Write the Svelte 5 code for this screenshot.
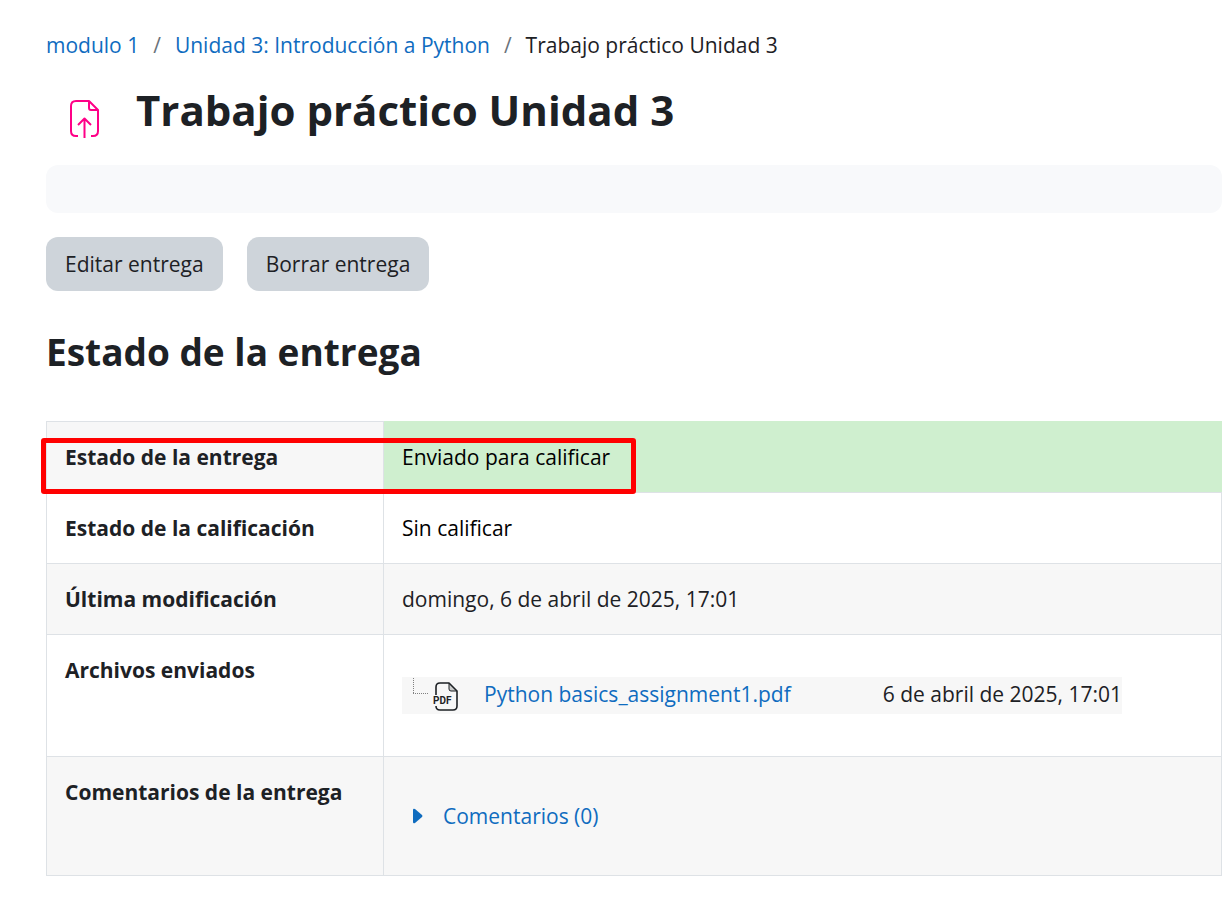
<script>
  const crumbs = [
    { label: 'modulo 1', href: '#modulo' },
    { label: 'Unidad 3: Introducción a Python', href: '#unidad' },
    { label: 'Trabajo práctico Unidad 3' }
  ];
  let open = $state(false);
</script>

<main>
  <nav aria-label="Ruta de navegación">
    <ol>
      {#each crumbs as crumb}
        <li>
          {#if crumb.href}
            <a href={crumb.href}>{crumb.label}</a>
          {:else}
            <span aria-current="page">{crumb.label}</span>
          {/if}
        </li>
      {/each}
    </ol>
  </nav>

  <header>
    <svg class="activity" viewBox="0 0 30 40" width="30" height="40" fill="none" stroke="#ff0087" stroke-width="2" stroke-linejoin="round" aria-hidden="true">
      <path d="M8 37H6Q1 37 1 32V7Q1 2 6 2H19L28 11V32Q28 37 23 37H21" />
      <path d="M19 2V9Q19 11 21 11H28" />
      <path d="M14.500 39V20M8 26L14.500 19.500L21 26" />
    </svg>
    <h1>Trabajo práctico Unidad 3</h1>
  </header>

  <div class="panel"></div>

  <div class="actions">
    <button type="button">Editar entrega</button>
    <button type="button">Borrar entrega</button>
  </div>

  <h2>Estado de la entrega</h2>

  <div class="status">
    <table>
      <tbody>
        <tr>
          <th scope="row">Estado de la entrega</th>
          <td class="submitted">Enviado para calificar</td>
        </tr>
        <tr>
          <th scope="row">Estado de la calificación</th>
          <td class="dark">Sin calificar</td>
        </tr>
        <tr>
          <th scope="row">Última modificación</th>
          <td>domingo, 6 de abril de 2025, 17:01</td>
        </tr>
        <tr>
          <th scope="row">Archivos enviados</th>
          <td class="files">
            <div class="file">
              <svg class="branch" viewBox="0 0 18 18" width="18" height="18" fill="none" stroke="#808080" stroke-width="1" stroke-dasharray="1 1" aria-hidden="true">
                <path d="M2.500 1V16M2 16.500H18" />
              </svg>
              <svg class="pdf" viewBox="0 0 28 32" width="28" height="32" fill="none" stroke="#1d2125" stroke-width="1.600" stroke-linejoin="round" aria-hidden="true">
                <path d="M4 14V6Q4 2 8 2H17L25 10V25Q25 29 21 29H8Q4 29 4 25" />
                <path d="M17 2V8Q17 10 19 10H25Z" fill="#1d2125" fill-opacity=".2" stroke-width="1" />
                <text x="1" y="23">PDF</text>
              </svg>
              <a href="#archivo">Python basics_assignment1.pdf</a>
              <time datetime="2025-04-06T17:01">6 de abril de 2025, 17:01</time>
            </div>
          </td>
        </tr>
        <tr>
          <th scope="row">Comentarios de la entrega</th>
          <td class="comments">
            <button type="button" class="toggle" aria-expanded={open} onclick={() => (open = !open)}>
              <svg class:open viewBox="0 0 10 16" width="10" height="16" fill="#0f6cbf" aria-hidden="true">
                <path d="M0 2Q0 0 2 1L9 7Q10 8 9 9L2 15Q0 16 0 14Z" />
              </svg>
              <span>Comentarios (0)</span>
            </button>
          </td>
        </tr>
      </tbody>
    </table>
    <div class="highlight"></div>
  </div>
</main>

<style>
  :global(body) {
    background: #fff;
  }
  main {
    padding: 28px 9px 31px 46px;
    font-family: "Segoe UI", "Open Sans", "Noto Sans", sans-serif;
    font-size: 21px;
    line-height: 34px;
    color: #1d2125;
  }
  a {
    color: #0f6cbf;
    text-decoration: none;
  }
  ol {
    display: flex;
    flex-wrap: wrap;
    margin: 0;
    padding: 0;
    list-style: none;
  }
  li + li::before {
    content: "/";
    padding: 0 14px;
    color: #6a737b;
  }
  header {
    display: flex;
    align-items: center;
    gap: 36px;
    margin-top: 19px;
    padding-left: 24px;
  }
  .activity {
    margin-top: 18px;
  }
  h1,
  h2 {
    margin: 0;
    font-weight: 700;
  }
  h1 {
    font-size: 42px;
    line-height: 54px;
  }
  .panel {
    height: 48px;
    margin-top: 26px;
    border-radius: 12px;
    background: #f8f9fb;
  }
  .actions {
    display: flex;
    gap: 24px;
    margin: 24px 0 36px;
  }
  button {
    font: inherit;
    cursor: pointer;
    border: 0;
  }
  .actions button {
    padding: 10px 19px;
    border-radius: 12px;
    background: #ced4da;
    color: #1d2125;
  }
  h2 {
    font-size: 37px;
    line-height: 50px;
  }
  .status {
    position: relative;
    margin-top: 44px;
  }
  table {
    width: 100%;
    table-layout: fixed;
    border-collapse: collapse;
  }
  th,
  td {
    padding: 18px;
    border: 1px solid #dee2e6;
    text-align: left;
    vertical-align: top;
  }
  th {
    width: 300px;
    font-weight: 700;
  }
  tr:nth-child(odd) {
    background: #f7f7f7;
  }
  .submitted {
    background: #cfefcf;
    border-top-color: #cfefcf;
    border-left-color: #cfefcf;
    border-right-color: #cfefcf;
    color: #000;
  }
  .dark {
    color: #000;
  }
  .files {
    padding: 42px 18px;
  }
  .file {
    display: flex;
    align-items: flex-start;
    width: 720px;
    max-width: 100%;
    height: 37px;
    background: #f7f7f7;
    white-space: nowrap;
  }
  .branch {
    margin: 0 3px 0 9px;
  }
  .pdf {
    margin: 4px 24px 0 0;
  }
  .pdf text {
    font: 700 10px Roboto, sans-serif;
    fill: #1d2125;
    stroke: none;
  }
  .file time {
    margin-left: auto;
  }
  .comments {
    padding: 42px 29px;
  }
  .toggle {
    display: flex;
    align-items: center;
    gap: 20px;
    padding: 0;
    background: none;
    color: #0f6cbf;
  }
  .toggle svg.open {
    transform: rotate(90deg);
  }
  .highlight {
    position: absolute;
    top: 17px;
    left: -5px;
    box-sizing: border-box;
    width: 595px;
    height: 56px;
    border: 5px solid #f00;
    border-radius: 3px;
    pointer-events: none;
  }
</style>
